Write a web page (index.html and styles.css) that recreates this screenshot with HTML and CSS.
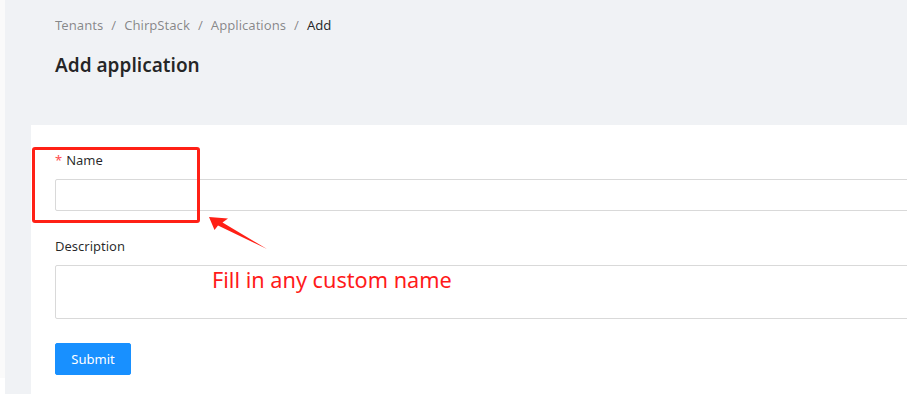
FILE: index.html
```html
<!DOCTYPE html>
<html lang="en">
<head>
    <meta charset="UTF-8">
    <meta name="viewport" content="width=device-width, initial-scale=1.0">
    <title>Add application</title>
    <link rel="stylesheet" href="styles.css">
</head>
<body>
    <div class="page">
        <div class="edge"></div>
        <main class="content">
            <div class="page-header">
                <nav class="breadcrumb">
                    <span>Tenants</span>
                    <span class="sep">/</span>
                    <span>ChirpStack</span>
                    <span class="sep">/</span>
                    <span>Applications</span>
                    <span class="sep">/</span>
                    <span class="current">Add</span>
                </nav>
                <h1>Add application</h1>
            </div>
            <div class="card">
                <form class="form">
                    <div class="form-item">
                        <label class="required">Name</label>
                        <input type="text" class="input">
                    </div>
                    <div class="form-item">
                        <label>Description</label>
                        <textarea class="input textarea"></textarea>
                    </div>
                    <button type="button" class="btn-primary">Submit</button>
                </form>
            </div>
        </main>

        <!-- annotation drawn over the screenshot -->
        <div class="mark-box"></div>
        <svg class="mark-arrow" width="80" height="50" viewBox="200 205 80 50">
            <polygon points="209,217 228,218.5 222.5,222.5 267,249 218,225.5 214.5,230" fill="#ff2016"/>
        </svg>
        <div class="mark-text">Fill in any custom name</div>
    </div>
</body>
</html>
```

FILE: styles.css
```css
body {
    margin: 0;
    overflow: hidden;
    font-family: "Noto Sans", Arial, sans-serif;
    font-size: 14px;
    color: rgba(0, 0, 0, 0.85);
    background-color: #fff;
}

.page {
    position: relative;
    display: flex;
    width: 1300px;
    height: 394px;
    overflow: hidden;
}

.edge {
    width: 5px;
    flex-shrink: 0;
    background-color: #fafafa;
    margin-bottom: 16px;
}

.content {
    flex: 1;
    display: flex;
    flex-direction: column;
    background-color: #f0f2f5;
}

.page-header {
    flex-shrink: 0;
    height: 125px;
    box-sizing: border-box;
    padding: 14px 0 0 50px;
}

.breadcrumb {
    display: flex;
    gap: 8px;
    font-size: 13.1px;
    line-height: 22px;
    color: rgba(0, 0, 0, 0.45);
}

.breadcrumb .current {
    color: rgba(0, 0, 0, 0.85);
}

.page-header h1 {
    margin: 15px 0 0;
    font-size: 19px;
    font-weight: 600;
    line-height: 28px;
    color: rgba(0, 0, 0, 0.85);
}

.card {
    flex: 1 0 auto;
    margin-left: 26px;
    padding: 24px;
    background-color: #fff;
}

.form-item {
    display: flex;
    flex-direction: column;
    margin-bottom: 24px;
}

.form-item label {
    line-height: 22px;
    padding-bottom: 8px;
    font-size: 13px;
}

.form-item label.required::before {
    content: "*";
    color: #ff4d4f;
    margin-right: 4px;
}

.input {
    box-sizing: border-box;
    height: 32px;
    border: 1px solid #d9d9d9;
    border-radius: 2px;
    padding: 4px 11px;
    font: inherit;
    background: #fff;
    outline: none;
}

.textarea {
    height: 54px;
    resize: none;
}

.btn-primary {
    width: 76px;
    height: 32px;
    border: 1px solid #1890ff;
    border-radius: 2px;
    background-color: #1890ff;
    color: #fff;
    font-family: inherit;
    font-size: 13px;
    padding: 0;
    cursor: pointer;
}

.mark-box {
    position: absolute;
    left: 32px;
    top: 147px;
    width: 168px;
    height: 76px;
    box-sizing: border-box;
    border: 3px solid #ff2016;
    border-radius: 3px;
}

.mark-arrow {
    position: absolute;
    left: 200px;
    top: 205px;
}

.mark-text {
    position: absolute;
    left: 212px;
    top: 265px;
    font-size: 21.7px;
    line-height: 30px;
    color: #ff1a1a;
}
```
